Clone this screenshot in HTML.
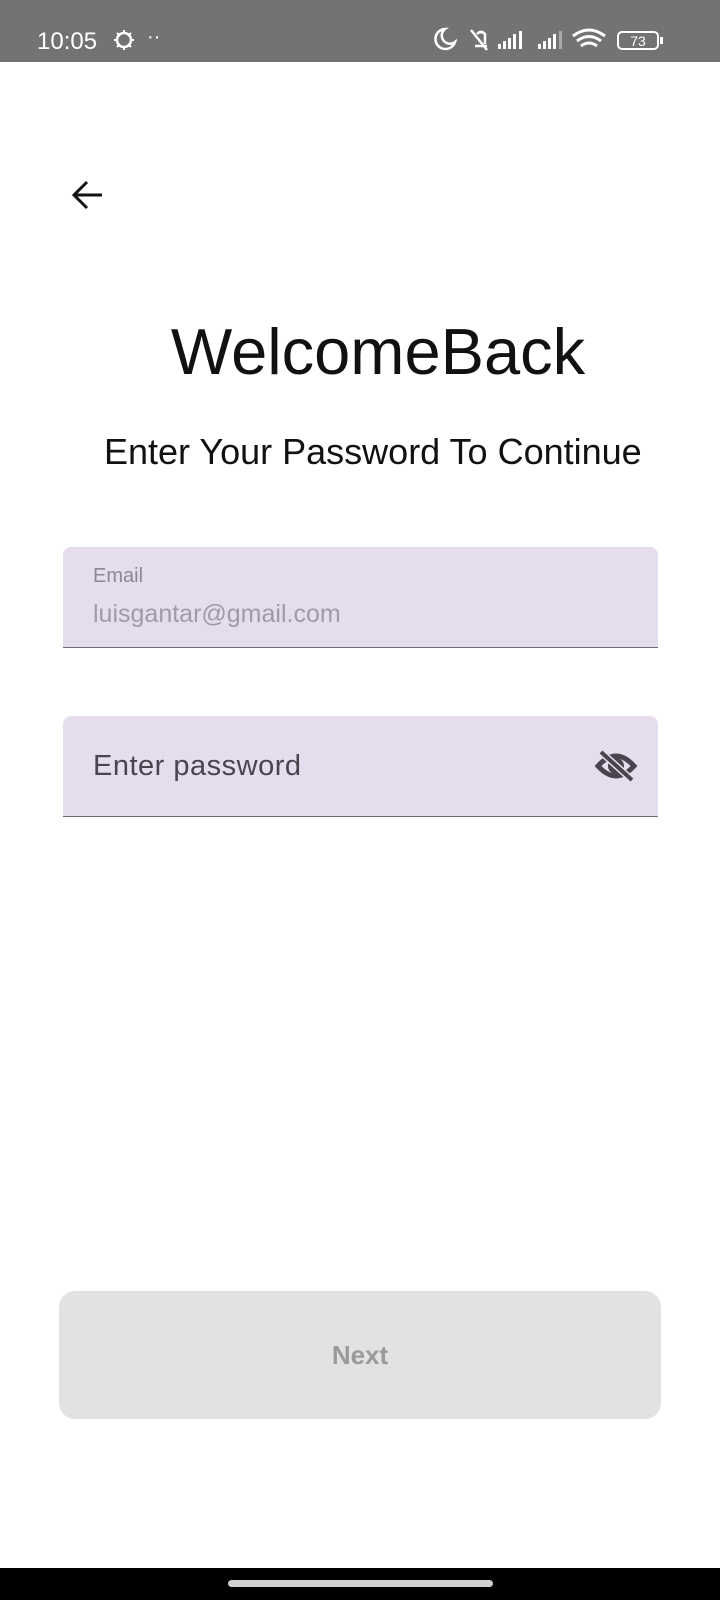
<!DOCTYPE html>
<html><head><meta charset="utf-8"><style>
body{margin:0;width:720px;height:1600px;background:#fff;font-family:"Liberation Sans",Roboto,sans-serif;position:relative;overflow:hidden}
.sb{position:absolute;left:0;top:0;width:720px;height:62px;background:#737373;color:#fff}
.abs{position:absolute}
.field{position:absolute;left:63px;width:595px;height:101px;background:#e5dded;border-radius:8px 8px 0 0;border-bottom:1.5px solid #6e6a77;box-sizing:border-box}
</style></head><body>
<div class="sb">
<div class="abs" style="left:37px;top:28px;font-size:24px">10:05</div>
<svg class="abs" style="left:112px;top:28px" width="24" height="24" viewBox="0 0 24 24"><circle cx="12" cy="12" r="7" fill="none" stroke="#fff" stroke-width="2.5"/><path d="M12 2v4M12 18v4M2 12h4M18 12h4M5 5l3 3M16 16l3 3M5 19l3-3M16 8l3-3" stroke="#fff" stroke-width="2"/></svg>
<div class="abs" style="left:147px;top:26px;font-size:20px">··</div>
<svg class="abs" style="left:433px;top:26px" width="240" height="28" viewBox="0 0 240 28">
<path d="M12 3a10 10 0 1 0 10 13a8 8 0 0 1-10-13z" fill="none" stroke="#fff" stroke-width="2.5"/>
<path d="M38 4l16 20M42 20h12M44 8q4-4 8 0v10" fill="none" stroke="#fff" stroke-width="2.5"/>
<g fill="#fff"><rect x="65" y="18" width="3" height="5"/><rect x="70" y="15" width="3" height="8"/><rect x="75" y="12" width="3" height="11"/><rect x="80" y="8" width="3" height="15"/><rect x="86" y="5" width="3" height="18"/>
<rect x="105" y="18" width="3" height="5"/><rect x="110" y="15" width="3" height="8"/><rect x="115" y="12" width="3" height="11"/><rect x="120" y="8" width="3" height="15"/><rect x="126" y="5" width="3" height="18" fill="#aaa"/></g>
<path d="M140 10q16-12 32 0M144 15q12-9 24 0M148 20q8-6 16 0" fill="none" stroke="#fff" stroke-width="3"/>
<rect x="185" y="6" width="40" height="17" rx="4" fill="none" stroke="#fff" stroke-width="2"/><rect x="227" y="11" width="3" height="7" fill="#fff"/>
<text x="205" y="20" fill="#fff" font-size="14" text-anchor="middle" font-family="Liberation Sans">73</text></svg>
</div>
<svg class="abs" style="left:70px;top:178px" width="36" height="34" viewBox="0 0 36 34"><path d="M32 17H5M17 4L4 17l13 13" fill="none" stroke="#111" stroke-width="3"/></svg>
<div class="abs" style="left:0;width:756px;text-align:center;top:314px;font-size:65px;color:#111">WelcomeBack</div>
<div class="abs" style="left:104px;top:431px;font-size:36px;color:#111">Enter Your Password To Continue</div>
<div class="field" style="top:547px">
<div class="abs" style="left:30px;top:18px;font-size:20px;color:#8b8794">Email</div>
<div class="abs" style="left:30px;top:53px;font-size:25px;color:#9f9ba6">luisgantar@gmail.com</div>
</div>
<div class="field" style="top:716px">
<div class="abs" style="left:30px;top:34px;font-size:29px;color:#49454f;letter-spacing:.5px">Enter password</div>
<svg class="abs" style="left:531px;top:32px" width="44" height="36" viewBox="0 0 44 36"><path d="M4 18q18-20 36 0q-18 20-36 0z" fill="none" stroke="#49454f" stroke-width="5"/><circle cx="22" cy="18" r="8" fill="#49454f"/><path d="M7 4l31 28" stroke="#e5dded" stroke-width="7"/><path d="M7 4l31 28" stroke="#49454f" stroke-width="4"/></svg>
</div>
<div class="abs" style="left:59px;top:1291px;width:602px;height:128px;background:#e2e2e2;border-radius:16px;text-align:center;line-height:128px;font-size:26px;font-weight:bold;color:#9a9a9a">Next</div>
<div class="abs" style="left:0;top:1568px;width:720px;height:32px;background:#000"></div>
<div class="abs" style="left:228px;top:1580px;width:265px;height:7px;border-radius:4px;background:#d0d0d0"></div>
</body></html>
